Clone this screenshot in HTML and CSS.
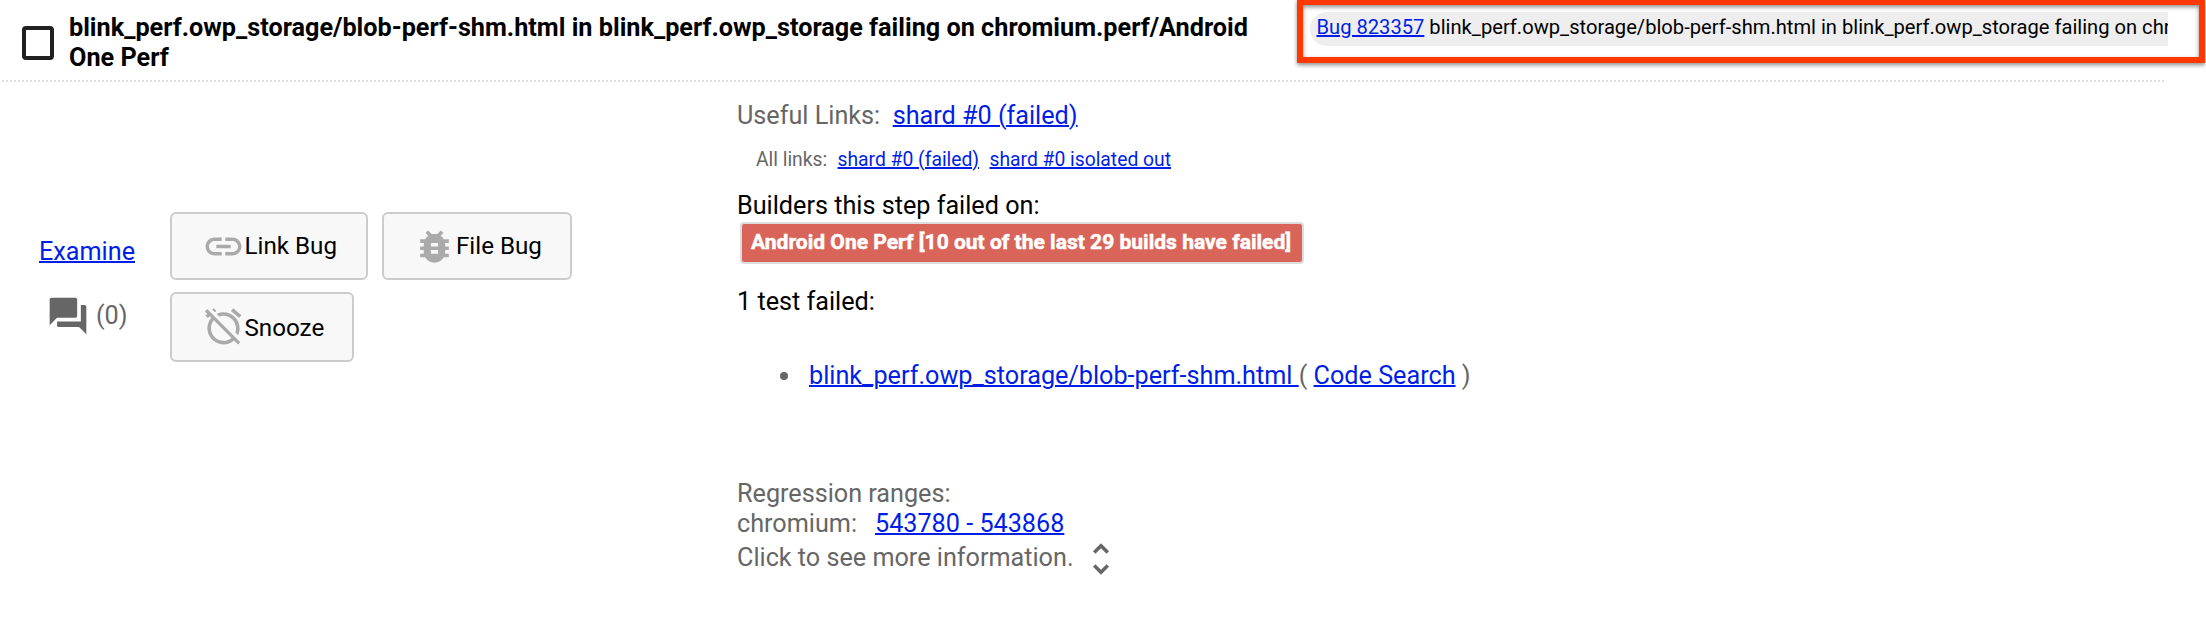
FILE: index.html
```html
<!DOCTYPE html>
<html lang="en">
<head>
<meta charset="utf-8">
<title>Alerts</title>
<link rel="stylesheet" href="styles.css">
</head>
<body>
<div class="alert">
  <header class="alert-header">
    <span class="checkbox"></span>
    <h1 class="title">blink_perf.owp_storage/blob-perf-shm.html in blink_perf.owp_storage failing on chromium.perf/Android One Perf</h1>
    <div class="bug"><a href="#">Bug 823357</a> blink_perf.owp_storage/blob-perf-shm.html in blink_perf.owp_storage failing on chromium.perf/Android One Perf</div>
  </header>
  <div class="highlight"></div>
  <main class="body">
    <div class="side">
      <a class="examine" href="#">Examine</a>
      <div class="comments">
        <svg class="icon" viewBox="0 0 24 24"><path d="M21 6h-2v9H6v2c0 .55.45 1 1 1h11l4 4V7c0-.55-.45-1-1-1zm-4 6V3c0-.55-.45-1-1-1H3c-.55 0-1 .45-1 1v14l4-4h10c.55 0 1-.45 1-1z"/></svg>
        <span class="count">(0)</span>
      </div>
    </div>
    <div class="actions">
      <button class="btn link-bug"><svg class="icon" viewBox="0 0 24 24"><path d="M3.9 12c0-1.71 1.39-3.1 3.1-3.1h4V7H7c-2.76 0-5 2.24-5 5s2.24 5 5 5h4v-1.9H7c-1.71 0-3.1-1.39-3.1-3.1zM8 13h8v-2H8v2zm9-6h-4v1.9h4c1.71 0 3.1 1.39 3.1 3.1s-1.39 3.1-3.1 3.1h-4V17h4c2.76 0 5-2.24 5-5s-2.24-5-5-5z"/></svg><span>Link Bug</span></button>
      <button class="btn file-bug"><svg class="icon" viewBox="0 0 24 24"><path d="M20 8h-2.81c-.45-.78-1.07-1.45-1.82-1.96L17 4.41 15.59 3l-2.17 2.17C12.96 5.06 12.49 5 12 5c-.49 0-.96.06-1.41.17L8.41 3 7 4.41l1.62 1.63C7.88 6.55 7.26 7.22 6.81 8H4v2h2.09c-.05.33-.09.66-.09 1v1H4v2h2v1c0 .34.04.67.09 1H4v2h2.81c1.04 1.79 2.97 3 5.19 3s4.15-1.21 5.19-3H20v-2h-2.09c.05-.33.09-.66.09-1v-1h2v-2h-2v-1c0-.34-.04-.67-.09-1H20V8zm-6 8h-4v-2h4v2zm0-4h-4v-2h4v2z"/></svg><span>File Bug</span></button>
      <button class="btn snooze"><svg class="icon" viewBox="0 0 24 24"><path d="M12 6c3.87 0 7 3.13 7 7 0 .84-.16 1.65-.43 2.4l1.52 1.52c.58-1.19.91-2.51.91-3.92 0-4.97-4.03-9-9-9-1.41 0-2.73.33-3.92.91L9.600 6.430C10.350 6.160 11.160 6 12 6zm10-.28l-4.600-3.860-1.290 1.530 4.600 3.860L22 5.720zM2.920 2.290L1.650 3.570 2.980 4.900l-1.110.93 1.420 1.420 1.110-.94.800.800C3.830 8.690 3 10.750 3 13c0 4.970 4.020 9 9 9 2.250 0 4.310-.83 5.890-2.200l2.200 2.200 1.270-1.270L3.890 3.270l-.970-.980zm13.550 16.100C15.260 19.390 13.700 20 12 20c-3.870 0-7-3.130-7-7 0-1.700.61-3.260 1.610-4.470l9.860 9.860zM8.020 3.280L6.600 1.860l-.86.71 1.420 1.420.86-.71z"/></svg><span>Snooze</span></button>
    </div>
    <div class="details">
      <p class="line useful">Useful Links:<a href="#">shard #0 (failed)</a></p>
      <p class="all-links">All links:<a href="#">shard #0 (failed)</a><a href="#">shard #0 isolated out</a></p>
      <p class="line dark">Builders this step failed on:</p>
      <span class="badge">Android One Perf [10 out of the last 29 builds have failed]</span>
      <p class="line dark tests">1 test failed:</p>
      <ul class="list"><li><span class="dot"></span><a class="test" href="#">blink_perf.owp_storage/blob-perf-shm.html </a><span>( <a href="#">Code Search</a> )</span></li></ul>
      <p class="line">Regression ranges:</p>
      <p class="line">chromium:<a class="range" href="#">543780 - 543868</a></p>
      <div class="more"><span>Click to see more information.</span><svg class="unfold" viewBox="0 0 24 24"><path d="M12 5.830L15.170 9l1.410-1.410L12 3 7.410 7.590 8.830 9 12 5.830zm0 12.340L8.830 15l-1.410 1.410L12 21l4.590-4.590L15.170 15 12 18.170z"/></svg></div>
    </div>
  </main>
</div>
</body>
</html>
```
FILE: styles.css
```css
* { box-sizing: border-box; }
body {
  margin: 0;
  background: #fff;
  color: #666;
  font-family: Roboto, "Liberation Sans", sans-serif;
  font-size: 25.2px;
  line-height: 30px;
}
a { color: #001ee6; text-decoration-thickness: 2px; }
p, h1, ul { margin: 0; padding: 0; font-size: inherit; }
svg { display: block; fill: currentColor; flex: none; }
.alert { position: relative; width: 2206px; height: 636px; overflow: hidden; }
.alert-header {
  display: flex;
  align-items: flex-start;
  height: 80px;
  width: 2168px;
  padding: 12px 0 0 22px;
  color: #000;
}
.checkbox {
  flex: none;
  width: 32px;
  height: 34px;
  margin-top: 14px;
  border: 4px solid #212121;
  border-radius: 4px;
}
.title {
  width: 1241px;
  flex: none;
  padding: 1px 0 0 15px;
  font-weight: 700;
  font-size: 25.24px;
}
.bug {
  flex: none;
  width: 858px;
  height: 34px;
  margin-left: 15px;
  padding-left: 6.5px;
  border-radius: 17px 0 0 17px;
  background: #eee;
  font-size: 20.15px;
  line-height: 31px;
  white-space: nowrap;
  overflow: hidden;
}
/* Callout frame drawn over the bug summary */
.highlight {
  position: absolute;
  left: 1297px;
  top: -1px;
  width: 908px;
  height: 64px;
  border: 6px solid #ff3800;
  filter: drop-shadow(0 2px 2px rgba(0, 0, 0, .45));
}
.body {
  display: flex;
  margin-left: 2px;
  width: 2166px;
  padding-top: 18px;
  position: relative;
}
.body::before {
  content: "";
  position: absolute;
  left: 0;
  top: 0;
  width: 2164px;
  height: 2px;
  background: repeating-linear-gradient(90deg, #ddd 0 2px, transparent 2px 4px);
}
.side { width: 168px; padding-top: 139px; }
.examine { display: block; margin-left: 37px; }
.comments { display: flex; align-items: center; margin: 27px 0 0 44px; }
.comments .icon { width: 44px; height: 44px; }
.count { margin-left: 6px; }
.actions {
  display: flex;
  flex-wrap: wrap;
  align-content: flex-start;
  gap: 12px 14px;
  width: 566px;
  padding-top: 114px;
}
.btn {
  display: flex;
  align-items: center;
  height: 68px;
  padding: 0 0 0 30px;
  border: 2px solid #ccc;
  border-radius: 6px;
  background: #f8f8f8;
  color: #000;
  font: 24.2px/30px Roboto, sans-serif;
}
.btn .icon { width: 43px; height: 43px; margin-right: -.5px; color: #aaa; }
.link-bug { width: 198px; }
.file-bug { width: 190px; }
.file-bug .icon { margin-left: -1px; margin-right: 0; }
.snooze { width: 184px; height: 70px; }
.snooze .icon { margin-top: -2px; }
.snooze span { padding-top: 2px; }
.details { width: 1400px; padding-top: 3px; padding-left: 1px; }
.line { height: 30px; white-space: nowrap; }
.useful a { margin-left: 12.5px; }
.all-links { height: 24px; margin: 17px 0 19px 19px; font-size: 19.3px; line-height: 24px; }
.all-links a { margin-left: 10.4px; }
.dark { color: #000; }
.badge {
  display: block;
  width: 564px;
  height: 42px;
  margin: 1px 0 0 3px;
  padding-left: 9px;
  border: 2px solid #ddd;
  border-radius: 4px;
  background: #d9655a;
  color: #fff;
  font-size: 21.05px;
  font-weight: 700;
  line-height: 36px;
  white-space: nowrap;
  -webkit-text-stroke: .5px #fff;
}
.tests { margin-top: 23px; }
.list { list-style: none; margin: 44px 0 88px; }
.list li { display: flex; align-items: center; height: 30px; white-space: pre; }
.dot { width: 8px; height: 8px; margin: 0 21px 0 43px; border-radius: 50%; background: #666; }
.range { margin-left: 18px; }
.more { display: flex; align-items: center; height: 40px; }
.more span { padding-bottom: 3px; }
.unfold { width: 42px; height: 42px; margin-left: 6px; }
```
